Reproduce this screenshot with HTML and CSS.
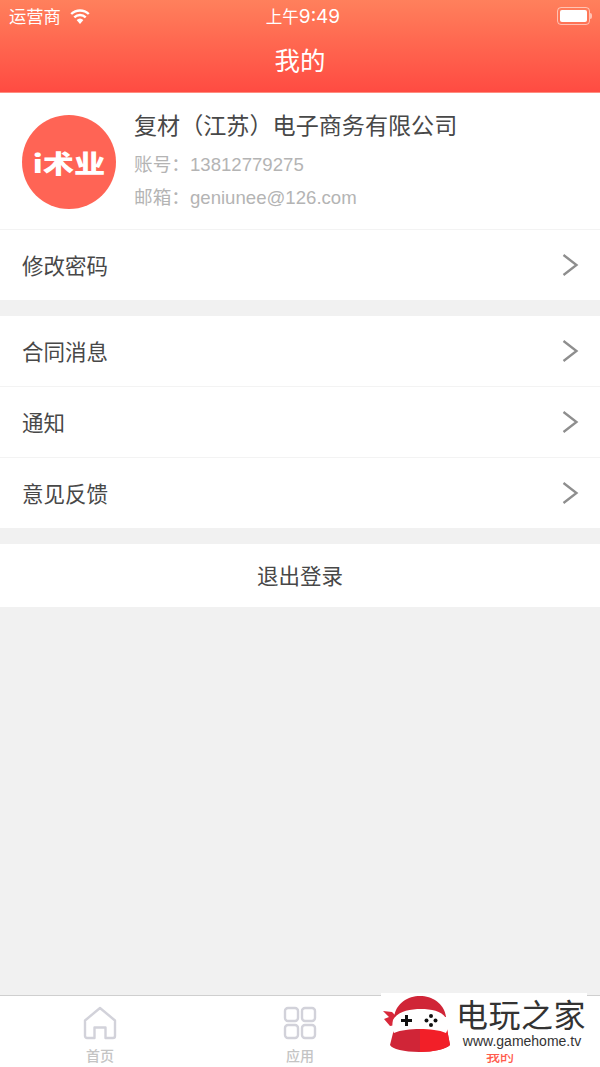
FILE: index.html
```html
<!DOCTYPE html>
<html lang="zh">
<head>
<meta charset="utf-8">
<title>我的</title>
<link rel="stylesheet" href="styles.css">
</head>
<body>
<div class="app">
  <header class="header">
    <div class="status">
      <div class="status-left">
        <span>运营商</span>
        <svg class="wifi" width="20" height="15" viewBox="0 0 20 15"><path d="M10 15 6.600 11.100a5 5 0 0 1 6.800 0Z" fill="#fff"/><path d="M4.300 8.300a8.300 8.300 0 0 1 11.400 0M1.200 5a12.800 12.800 0 0 1 17.600 0" fill="none" stroke="#fff" stroke-width="2.400"/></svg>
      </div>
      <span class="clock">上午<span class="clock-digits">9:49</span></span>
      <div class="battery"><span class="battery-body"><span class="battery-fill"></span></span><span class="battery-tip"></span></div>
    </div>
    <h1 class="title">我的</h1>
  </header>

  <section class="group">
    <div class="profile">
      <div class="avatar"><span class="avatar-text">i术业</span></div>
      <div class="info">
        <div class="company">复材（江苏）电子商务有限公司</div>
        <div class="meta meta-first"><span class="meta-label">账号：</span>13812779275</div>
        <div class="meta"><span class="meta-label">邮箱：</span>geniunee@126.com</div>
      </div>
    </div>
    <div class="row"><span>修改密码</span><svg class="chev" width="18" height="24" viewBox="0 0 18 24"><path d="M2.500 2 15.500 12 2.500 22" fill="none" stroke="#8e8e8e" stroke-width="2.300"/></svg></div>
  </section>

  <section class="group">
    <div class="row"><span>合同消息</span><svg class="chev" width="18" height="24" viewBox="0 0 18 24"><path d="M2.500 2 15.500 12 2.500 22" fill="none" stroke="#8e8e8e" stroke-width="2.300"/></svg></div>
    <div class="row"><span>通知</span><svg class="chev" width="18" height="24" viewBox="0 0 18 24"><path d="M2.500 2 15.500 12 2.500 22" fill="none" stroke="#8e8e8e" stroke-width="2.300"/></svg></div>
    <div class="row"><span>意见反馈</span><svg class="chev" width="18" height="24" viewBox="0 0 18 24"><path d="M2.500 2 15.500 12 2.500 22" fill="none" stroke="#8e8e8e" stroke-width="2.300"/></svg></div>
  </section>

  <section class="logout"><span>退出登录</span></section>

  <main class="spacer"></main>

  <nav class="tabbar">
    <div class="tab">
      <svg width="34" height="34" viewBox="0 0 34 34"><path d="M2 14.500 17 2l15 12.500V30a2 2 0 0 1-2 2h-7.500V21.500h-11V32H4a2 2 0 0 1-2-2Z" fill="none" stroke="#d2d2da" stroke-width="2.400" stroke-linejoin="round"/></svg>
      <span>首页</span>
    </div>
    <div class="tab">
      <svg width="34" height="34" viewBox="0 0 34 34" fill="none" stroke="#d2d2da" stroke-width="2.400"><rect x="2" y="2" width="13" height="13" rx="3"/><rect x="19" y="2" width="13" height="13" rx="3"/><rect x="2" y="19" width="13" height="13" rx="3"/><rect x="19" y="19" width="13" height="13" rx="3"/></svg>
      <span>应用</span>
    </div>
    <div class="tab tab-active">
      <svg width="34" height="34" viewBox="0 0 34 34"></svg>
      <span>我的</span>
    </div>
  </nav>

  <aside class="watermark">
    <svg class="ninja" width="70" height="58" viewBox="0 0 70 58">
      <path d="M8 31 2 24 7 22 1 16l9 1 5 5-1 8Z" fill="#d8283a"/>
      <path d="M12 22C14 8 26 1 38 1s24 7 26 21Z" fill="#d02537"/>
      <path d="M12 34h53l3 16c-4 4-16 7-31 7s-27-3-29-7Z" fill="#d02537"/>
      <path d="M38 34h27l3 16c-4 4-16 7-30 7Z" fill="#f21f28"/>
      <path d="M11 25C16 16 28 14 39 14s22 2 26 11c2 5 1 10-1 13-7-3-16-4-26-4s-19 1-26 4c-2-3-2-9-1-13Z" fill="#fff"/>
      <path d="M23 20h3v4h4v3h-4v4h-3v-4h-4v-3h4Z" fill="#111"/>
      <circle cx="49" cy="21" r="2" fill="#111"/><circle cx="49" cy="30" r="2" fill="#111"/><circle cx="44.500" cy="25.500" r="2" fill="#111"/><circle cx="53.500" cy="25.500" r="2" fill="#111"/>
    </svg>
    <div class="wm-text">
      <div class="wm-name">电玩之家</div>
      <div class="wm-url">www.gamehome.tv</div>
    </div>
  </aside>
</div>
</body>
</html>
```
FILE: styles.css
```css
* { box-sizing: border-box; margin: 0; padding: 0; }
html, body { height: 100%; }
body {
  font-family: "Noto Sans CJK SC", "Liberation Sans", sans-serif;
  background: #f1f1f1;
  color: #484848;
  overflow: hidden;
}
.app {
  position: relative;
  width: 600px;
  height: 1067px;
  display: flex;
  flex-direction: column;
}
.header {
  height: 93px;
  flex: none;
  background: linear-gradient(180deg, #ff805c 0%, #ff4b42 100%);
  border-bottom: 1px solid #ff8d80;
  color: #fff;
  display: flex;
  flex-direction: column;
}
.status {
  height: 31px;
  padding: 0 8px 0 9px;
  display: flex;
  align-items: center;
  justify-content: space-between;
  font-size: 17.300px;
  position: relative;
}
.status-left { display: flex; align-items: center; gap: 9px; }
.wifi { display: block; margin-top: 1px; }
.clock {
  position: absolute;
  left: 6px;
  right: 0;
  text-align: center;
  font-size: 16.500px;
}
.clock-digits { font-family: Inter, "Liberation Sans", sans-serif; font-size: 19px; }
.battery { display: flex; align-items: center; }
.battery-body {
  width: 33px;
  height: 18px;
  border: 1px solid rgba(255,255,255,.55);
  border-radius: 4px;
  padding: 2px;
  display: block;
}
.battery-fill { display: block; height: 100%; background: #fff; border-radius: 2px; }
.battery-tip { width: 2px; height: 6px; background: rgba(255,255,255,.55); border-radius: 0 2px 2px 0; }
.title {
  font-size: 25.500px;
  font-weight: 400;
  text-align: center;
  line-height: 34px;
  margin-top: 11px;
}
.group { background: #fff; flex: none; margin-bottom: 16px; }
.profile {
  height: 137px;
  display: flex;
  align-items: flex-start;
  padding: 14px 0 0 22px;
  border-bottom: 1px solid #f3f3f3;
}
.avatar {
  width: 94px;
  height: 94px;
  margin-top: 8px;
  border-radius: 50%;
  background: #ff6455;
  color: #fff;
  font-size: 25px;
  font-weight: 900;
  display: flex;
  align-items: center;
  justify-content: center;
}
.avatar-text { display: block; transform: scaleX(1.25); line-height: 1; }
.info { margin-left: 18px; }
.company { font-size: 23.100px; line-height: 34px; color: #484848; }
.meta {
  font-family: "Liberation Sans", "Noto Sans CJK SC", sans-serif;
  font-size: 18.600px;
  height: 33px;
  line-height: 33px;
  overflow: hidden;
  color: #b4b4b4;
}
.meta-first { margin-top: 7px; }
.meta-label { font-family: "Noto Sans CJK SC", sans-serif; font-size: 18.670px; line-height: 1; }
.row {
  height: 71px;
  padding: 0 21px 0 22px;
  display: flex;
  align-items: center;
  justify-content: space-between;
  font-size: 21.500px;
  border-bottom: 1px solid #f3f3f3;
  color: #484848;
}
.row span { margin-top: -2px; }
.row:last-child { height: 70px; border-bottom: 0; }
.logout {
  flex: none;
  height: 63px;
  background: #fff;
  display: flex;
  align-items: center;
  justify-content: center;
  font-size: 21.500px;
  color: #484848;
}
.logout span { margin-top: -2px; }
.spacer { flex: 1; background: #f1f1f1; }
.tabbar {
  flex: none;
  height: 72px;
  background: #fff;
  border-top: 1px solid #cfcfcf;
  display: flex;
  justify-content: space-around;
  padding: 10px 0 0;
}
.tab {
  width: 200px;
  display: flex;
  flex-direction: column;
  align-items: center;
  gap: 7px;
  font-size: 14px;
  font-weight: 500;
  line-height: 16px;
  color: #c4c4c4;
}
.tab svg { display: block; }
.tab-active { color: #ff5b4d; }
.watermark {
  position: absolute;
  left: 381px;
  top: 993px;
  width: 206px;
  height: 61px;
  background: #fff;
  display: flex;
  align-items: flex-start;
}
.ninja { flex: none; margin: 2px 0 0 1px; }
.wm-text { margin-left: 6px; }
.wm-name {
  font-size: 32px;
  line-height: 38px;
  letter-spacing: .5px;
  color: #333;
  margin: 1px 0 0 -2px;
  white-space: nowrap;
}
.wm-url {
  font-family: "Liberation Sans", sans-serif;
  font-size: 14px;
  line-height: 14px;
  margin-top: 2px;
  color: #333;
  text-align: center;
}
```
